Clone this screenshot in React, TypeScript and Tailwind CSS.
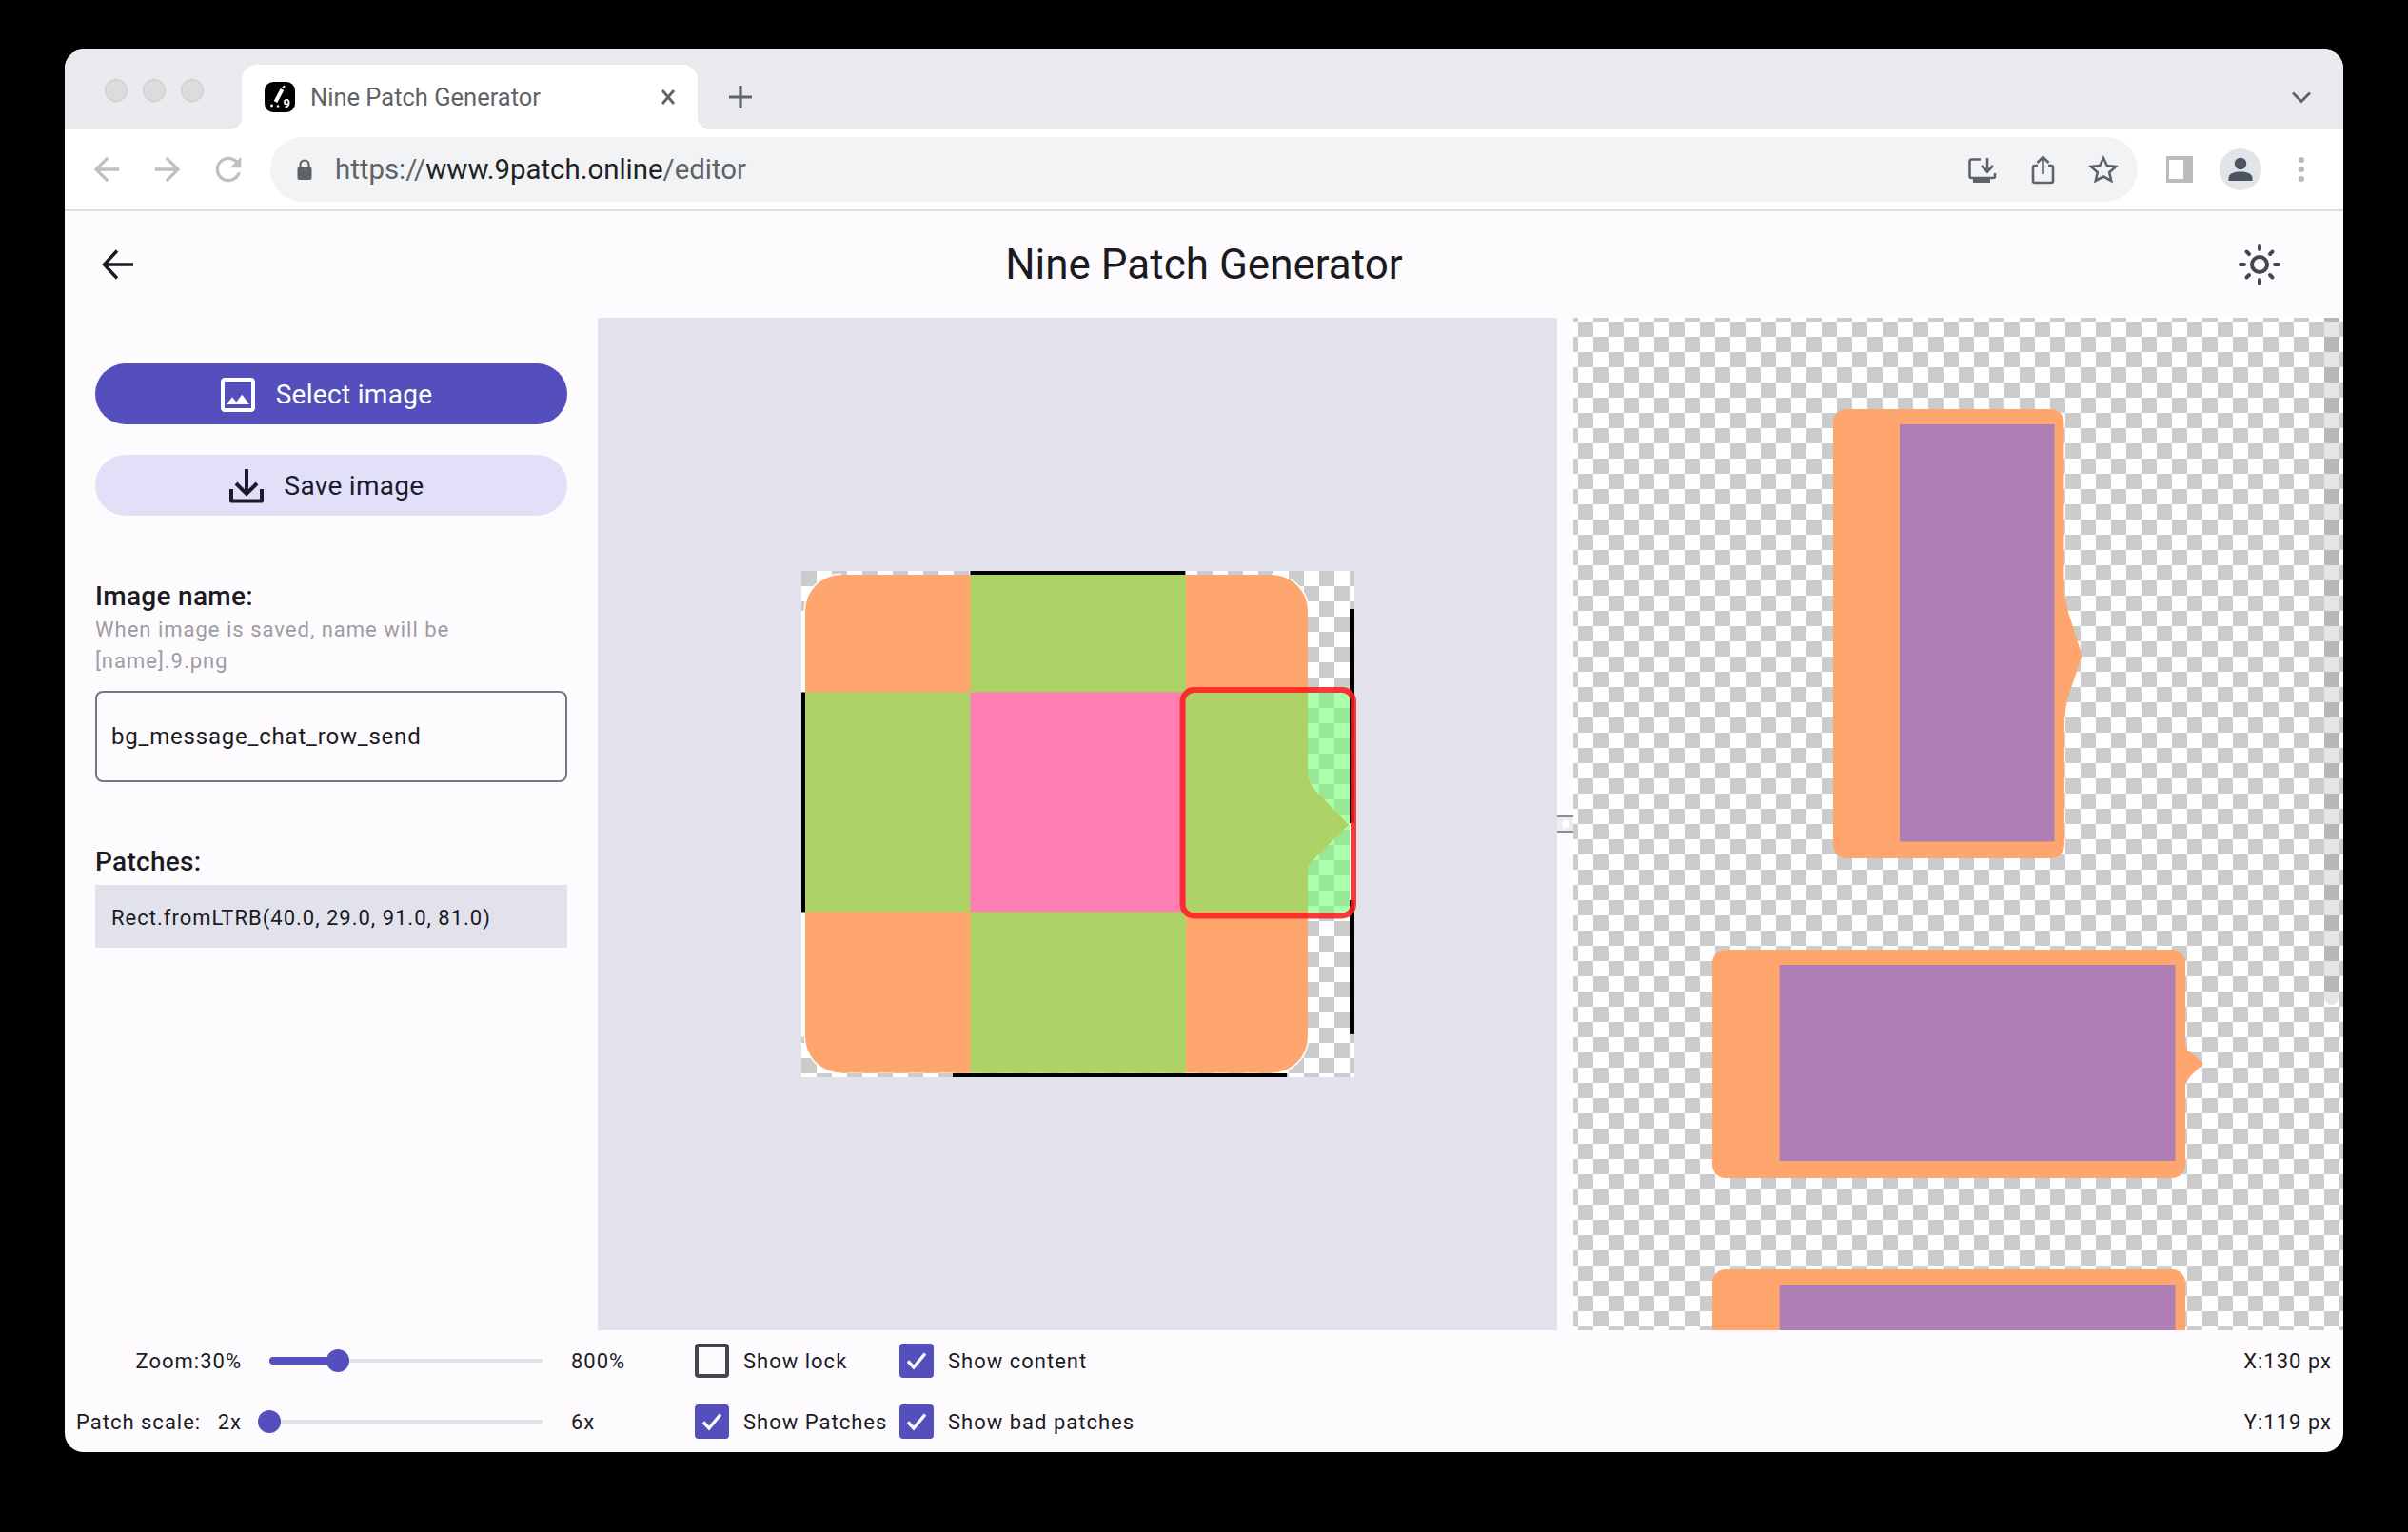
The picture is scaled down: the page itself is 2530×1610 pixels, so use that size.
import type { ReactNode } from "react";

const ORANGE = "#ffa56e";
const GREEN = "#add366";
const PINK = "#ff7fb3";
const PURPLE = "#af7eb4";

function Favicon() {
  return (
    <svg width="32" height="32" viewBox="0 0 32 32" className="shrink-0">
      <rect x="0" y="0" width="32" height="32" rx="9" fill="#000" />
      <path d="M18.5 8 L11.5 21" stroke="#fff" strokeWidth="4" />
      <path d="M19.5 4.5 L20.5 6" stroke="#fff" strokeWidth="3" />
      <circle cx="7.5" cy="25" r="1.4" fill="#fff" />
      <circle cx="14" cy="25.5" r="1.2" fill="#fff" />
      <text x="19.5" y="27" fontSize="13" fontWeight="700" fill="#fff" fontFamily="Roboto, sans-serif">9</text>
    </svg>
  );
}

function MaterialIcon({ d, color, size = 40 }: { d: string; color: string; size?: number }) {
  return (
    <svg width={size} height={size} viewBox="0 0 24 24" fill={color} className="shrink-0">
      <path d={d} />
    </svg>
  );
}

function ToolbarIcon({ children }: { children: ReactNode }) {
  return (
    <svg width="40" height="40" viewBox="0 0 40 40" fill="none" stroke="#5f6368" strokeWidth="2.6" className="shrink-0">
      {children}
    </svg>
  );
}

function BrowserChrome() {
  return (
    <>
      <div className="flex h-[84px] items-start bg-[#e8eaed]">
        <div className="ml-[42px] mt-[31px] flex gap-4">
          <span className="h-6 w-6 rounded-full border border-[#c6c6c6] bg-[#dcdcdc]" />
          <span className="h-6 w-6 rounded-full border border-[#c6c6c6] bg-[#dcdcdc]" />
          <span className="h-6 w-6 rounded-full border border-[#c6c6c6] bg-[#dcdcdc]" />
        </div>
        <div className="relative ml-[40px] mt-4 flex h-[68px] w-[479px] items-center rounded-t-2xl bg-white pl-6 pr-[19px]">
          <span className="absolute -left-3 bottom-0 h-3 w-3 bg-[radial-gradient(circle_at_0_0,transparent_11.5px,#ffffff_12px)]" />
          <span className="absolute -right-3 bottom-0 h-3 w-3 bg-[radial-gradient(circle_at_100%_0,transparent_11.5px,#ffffff_12px)]" />
          <Favicon />
          <span className="ml-4 text-[25.5px] text-[#5f6368]">Nine Patch Generator</span>
          <svg width="24" height="24" viewBox="0 0 24 24" className="ml-auto" stroke="#5f6368" strokeWidth="2.8">
            <path d="M6 5 L18 19 M18 5 L6 19" />
          </svg>
        </div>
        <svg width="32" height="32" viewBox="0 0 32 32" className="ml-[29px] mt-[34px]" stroke="#5f6368" strokeWidth="3.2">
          <path d="M16 4 V28 M4 16 H28" />
        </svg>
        <svg width="24" height="24" viewBox="0 0 24 24" fill="none" stroke="#5f6368" strokeWidth="2.8" className="ml-auto mr-8 mt-[38px]">
          <path d="M3 7.5 L12 16.5 L21 7.5" />
        </svg>
      </div>
      <div className="flex h-[86px] items-start border-b-2 border-[#dadce0] bg-white pt-2">
        <div className="ml-6 mt-[14px] flex gap-6">
          <MaterialIcon color="#bdc1c6" d="M20 11H7.83l5.59-5.59L12 4l-8 8 8 8 1.41-1.41L7.83 13H20v-2z" />
          <MaterialIcon color="#bdc1c6" d="M12 4l-1.41 1.41L16.17 11H4v2h12.17l-5.58 5.59L12 20l8-8z" />
          <MaterialIcon color="#bdc1c6" d="M17.65 6.35C16.2 4.9 14.21 4 12 4c-4.42 0-7.99 3.58-7.99 8s3.57 8 7.99 8c3.73 0 6.84-2.55 7.73-6h-2.08c-.82 2.33-3.04 4-5.65 4-3.31 0-6-2.69-6-6s2.69-6 6-6c1.66 0 3.14.69 4.22 1.78L13 11h7V4l-2.35 2.35z" />
        </div>
        <div className="ml-6 flex h-[68px] w-[1962px] items-center rounded-full bg-[#f1f3f4] pl-6 pr-4">
          <svg width="24" height="24" viewBox="0 0 24 24" className="shrink-0">
            <path d="M7.5 11 V7 a4.5 4.5 0 0 1 9 0 V11" fill="none" stroke="#5f6368" strokeWidth="2.2" />
            <rect x="4.5" y="9.5" width="15" height="13.5" rx="2" fill="#5f6368" />
          </svg>
          <span className="ml-5 text-[29.4px] text-[#5f6368]">
            https://<span className="text-[#202124]">www.9patch.online</span>/editor
          </span>
          <div className="ml-auto flex gap-6">
            <ToolbarIcon>
              <path d="M19 9.5 H9.5 a2 2 0 0 0 -2 2 V27 a2 2 0 0 0 2 2 H32 a2 2 0 0 0 2 -2 V24" />
              <path d="M26 8 V22 M20 16 L26 22.5 L32 16" />
              <rect x="11" y="29" width="18" height="5" fill="#5f6368" stroke="none" />
            </ToolbarIcon>
            <ToolbarIcon>
              <path d="M15 16 H12 a2 2 0 0 0 -2 2 V32 a2 2 0 0 0 2 2 H29 a2 2 0 0 0 2 -2 V18 a2 2 0 0 0 -2 -2 H26" />
              <path d="M20.5 8 V25 M14.5 13 L20.5 7 L26.5 13" />
            </ToolbarIcon>
            <ToolbarIcon>
              <path d="M20 8 L23.8 16 L33 17 L26.2 23.2 L28.2 32 L20 27.5 L11.8 32 L13.8 23.2 L7 17 L16.2 16 Z" />
            </ToolbarIcon>
          </div>
        </div>
        <div className="ml-[30px] mt-5 flex h-7 w-[28px] bg-[#bcbcbc] py-1 pl-[3px] pr-[10px]">
          <div className="h-full w-full bg-white" />
        </div>
        <div className="ml-7 mt-3 flex h-11 w-11 items-center justify-center rounded-full bg-[#e1e4e8]">
          <svg width="44" height="44" viewBox="0 0 44 44" fill="#4a5462">
            <circle cx="22" cy="16" r="6.2" />
            <path d="M9.5 34 V31 C9.5 26 16 24.5 22 24.5 C28 24.5 34.5 26 34.5 31 V34 Z" />
          </svg>
        </div>
        <div className="ml-[39px] mt-[21px] flex flex-col gap-1">
          <span className="h-1.5 w-1.5 rounded-full bg-[#b9b9b9]" />
          <span className="h-1.5 w-1.5 rounded-full bg-[#b9b9b9]" />
          <span className="h-1.5 w-1.5 rounded-full bg-[#b9b9b9]" />
        </div>
      </div>
    </>
  );
}

function AppHeader() {
  return (
    <div className="grid h-[112px] shrink-0 grid-cols-[1fr_auto_1fr] items-center">
      <svg width="48" height="48" viewBox="0 0 48 48" fill="none" stroke="#1b1b1f" strokeWidth="3.4" className="ml-8">
        <path d="M40 24 H10 M23 9.5 L9.5 24 L23 38.5" />
      </svg>
      <div className="text-[44px] leading-none text-[#1b1b1f]">Nine Patch Generator</div>
      <svg width="48" height="48" viewBox="0 0 48 48" fill="none" stroke="#49454f" strokeWidth="4" strokeLinecap="round" className="ml-auto mr-16">
        <circle cx="24" cy="24" r="8" />
        <path d="M24 4 V8 M24 40 V44 M4 24 H8 M40 24 H44 M10.5 10.5 L13 13 M35 35 L37.5 37.5 M37.5 10.5 L35 13 M13 35 L10.5 37.5" />
      </svg>
    </div>
  );
}

function Sidebar() {
  return (
    <div className="w-[560px] shrink-0 px-8 pt-12">
      <div className="flex h-16 items-center justify-center gap-4 rounded-full bg-[#544fbd] pr-4 pt-0.5 text-[28px] tracking-[0.3px] text-white">
        <svg width="48" height="48" viewBox="0 0 24 24" fill="#ffffff">
          <path d="M19 5v14H5V5h14m0-2H5c-1.1 0-2 .9-2 2v14c0 1.1.9 2 2 2h14c1.1 0 2-.9 2-2V5c0-1.1-.9-2-2-2zm-4.86 8.86l-3 3.87L9 13.14 6 17h12l-3.86-5.14z" />
        </svg>
        Select image
      </div>
      <div className="mt-8 flex h-16 items-center justify-center gap-4 rounded-full bg-[#e2e0f9] pr-4 pt-0.5 text-[28px] tracking-[0.3px] text-[#1b1a2e]">
        <svg width="48" height="48" viewBox="0 0 48 48" fill="none" stroke="#1b1a2e" strokeWidth="4">
          <path d="M24 6 V32 M13 21 L24 32 L35 21" />
          <path d="M8 27 V39.5 H40 V27" strokeLinejoin="round" />
        </svg>
        Save image
      </div>
      <div className="mt-16 pt-px text-[28px] font-medium leading-10 tracking-[0.3px] text-[#1b1b1f]">Image name:</div>
      <div className="-mt-0.5 text-[22px] leading-[33px] tracking-[1px] text-[#9d9ca3]">
        When image is saved, name will be
        <br />
        [name].9.png
      </div>
      <input
        readOnly
        value="bg_message_chat_row_send"
        className="mt-[15px] block h-24 w-full rounded-lg border-2 border-[#77767f] bg-transparent pl-[15px] text-[24px] tracking-[0.8px] text-[#1b1b1f] outline-none"
      />
      <div className="mt-16 text-[28px] font-medium leading-10 tracking-[0.3px] text-[#1b1b1f]">Patches:</div>
      <div className="mt-1 flex h-[66px] items-center bg-[#e2e2ec] pl-[17px] pt-0.5 text-[22px] tracking-[1px] text-[#1b1b1f]">
        Rect.fromLTRB(40.0, 29.0, 91.0, 81.0)
      </div>
    </div>
  );
}

function PatchImage() {
  const shape =
    "M43 4 H495 A38 38 0 0 1 533 42 V217 Q536 226 541 231 L575.7 266.7 L541 301 Q536 306 533 310 V489.5 A38 38 0 0 1 495 527.5 H43 A38 38 0 0 1 5 489.5 V42 A38 38 0 0 1 43 4 Z";
  return (
    <svg width="582" height="532" viewBox="0 0 582 532" className="shrink-0 overflow-visible">
      <defs>
        <pattern id="checkGrey" x="1" y="0" width="32" height="32" patternUnits="userSpaceOnUse">
          <rect width="32" height="32" fill="#ffffff" />
          <rect width="16" height="16" fill="#cccccc" />
          <rect x="16" y="16" width="16" height="16" fill="#cccccc" />
        </pattern>
        <pattern id="checkGreen" x="1" y="0" width="32" height="32" patternUnits="userSpaceOnUse">
          <rect width="32" height="32" fill="#aaffaa" />
          <rect width="16" height="16" fill="#98e898" />
          <rect x="16" y="16" width="16" height="16" fill="#98e898" />
        </pattern>
        <clipPath id="shapeClip">
          <path d={shape} />
        </clipPath>
      </defs>
      <rect x="1" y="0" width="581" height="532" fill="url(#checkGrey)" />
      <rect x="533" y="128" width="45" height="231" fill="url(#checkGreen)" />
      <path d="M5 42 V489.5" fill="none" stroke="#ffffff" strokeWidth="8" />
      <path
        d="M533 42 A38 38 0 0 0 495 4 M43 4 A38 38 0 0 0 5 42 M5 489.5 A38 38 0 0 0 43 527.5 M495 527.5 A38 38 0 0 0 533 489.5"
        fill="none"
        stroke="#ffffff"
        strokeWidth="3"
      />
      <g clipPath="url(#shapeClip)">
        <rect x="0" y="0" width="582" height="532" fill={ORANGE} />
        <rect x="178.4" y="0" width="226.6" height="532" fill={GREEN} />
        <rect x="0" y="127.5" width="582" height="231" fill={GREEN} />
        <rect x="178.4" y="127.5" width="226.6" height="231" fill={PINK} />
      </g>
      <rect x="178.4" y="0" width="226" height="4" fill="#000" />
      <rect x="160" y="528" width="351" height="4" fill="#000" />
      <rect x="1" y="127.5" width="4" height="231" fill="#000" />
      <rect x="577" y="40" width="5" height="225" fill="#000" />
      <rect x="577" y="265" width="5" height="81" fill="#fff" />
      <rect x="577" y="346" width="5" height="141" fill="#000" />
      <rect x="401.5" y="125" width="179.5" height="237.5" rx="12" fill="none" stroke="#fb2020" strokeOpacity="0.88" strokeWidth="6" />
    </svg>
  );
}

function TallBubble() {
  return (
    <svg width="262" height="472" viewBox="0 0 262 472" className="shrink-0">
      <path
        d="M14 0 H228.5 A14 14 0 0 1 242.5 14 V192 L246 210 L261.6 259 L246 305 L243 323 V458 A14 14 0 0 1 229 472 H14 A14 14 0 0 1 0 458 V14 A14 14 0 0 1 14 0 Z"
        fill={ORANGE}
      />
      <rect x="70" y="16" width="162.6" height="438.5" fill={PURPLE} />
    </svg>
  );
}

function WideBubble() {
  return (
    <svg width="516" height="240" viewBox="0 0 516 240" className="shrink-0">
      <path
        d="M14 0 H483 A14 14 0 0 1 497 14 V99 Q498 106 503 108 L516 120 L503 132 Q499 137 497 142 V226 A14 14 0 0 1 483 240 H14 A14 14 0 0 1 0 226 V14 A14 14 0 0 1 14 0 Z"
        fill={ORANGE}
      />
      <rect x="70.6" y="16" width="416" height="206" fill={PURPLE} />
    </svg>
  );
}

function Workspace() {
  return (
    <div className="flex h-[1064px] shrink-0">
      <Sidebar />
      <div className="flex w-[1008px] shrink-0 items-center justify-center bg-[#e2e2ec]">
        <PatchImage />
      </div>
      <div className="flex w-[17px] shrink-0 items-center">
        <div className="flex h-[18px] w-full items-center justify-center border-y-2 border-[#8d8d97] bg-[#eeeef2]">
          <span className="h-2 w-2 rounded-full bg-white" />
        </div>
      </div>
      <div className="relative flex flex-1 flex-col items-center gap-24 overflow-hidden bg-[conic-gradient(#cccccc_25%,#ffffff_0_50%,#cccccc_0_75%,#ffffff_0)] bg-[length:32px_32px] bg-[position:-11px_4px] pr-0.5 pt-24">
        <TallBubble />
        <WideBubble />
        <WideBubble />
        <div className="absolute right-[5px] top-0 h-[722px] w-[15px] rounded-b-full bg-black/10" />
      </div>
    </div>
  );
}

function Slider({ active }: { active: number }) {
  return (
    <div className="relative ml-[29px] h-1 w-[287px] shrink-0 rounded-full bg-[#e4e1e6]">
      <div className="absolute -top-0.5 left-0 h-2 rounded-full bg-[#544fbd]" style={{ width: active }} />
      <div className="absolute -top-2.5 h-6 w-6 -translate-x-1/2 rounded-full bg-[#544fbd]" style={{ left: active }} />
    </div>
  );
}

function Check({ checked, label, width }: { checked: boolean; label: string; width: string }) {
  return (
    <div className={`flex shrink-0 items-center gap-[15px] ${width}`}>
      {checked ? (
        <div className="flex h-9 w-9 items-center justify-center rounded-[4px] bg-[#544fbd]">
          <svg width="28" height="28" viewBox="0 0 28 28" fill="none" stroke="#fff" strokeWidth="3.4">
            <path d="M5 14.5 L11 21 L23 6.5" />
          </svg>
        </div>
      ) : (
        <div className="h-9 w-9 rounded-[4px] border-4 border-[#47464f]" />
      )}
      <span>{label}</span>
    </div>
  );
}

function BottomBar() {
  return (
    <div className="flex flex-col text-[22px] tracking-[1px] text-[#1b1b1f]">
      <div className="flex h-16 items-center">
        <div className="ml-3 w-[174px] shrink-0 text-right">Zoom:30%</div>
        <Slider active={72} />
        <div className="ml-[30px] w-[130px] shrink-0">800%</div>
        <Check checked={false} label="Show lock" width="w-[215px]" />
        <Check checked label="Show content" width="w-[300px]" />
        <div className="ml-auto pr-3">X:130 px</div>
      </div>
      <div className="flex h-16 items-center">
        <div className="ml-3 flex w-[174px] shrink-0 justify-between">
          <span>Patch scale:</span>
          <span>2x</span>
        </div>
        <Slider active={0} />
        <div className="ml-[30px] w-[130px] shrink-0">6x</div>
        <Check checked label="Show Patches" width="w-[215px]" />
        <Check checked label="Show bad patches" width="w-[300px]" />
        <div className="ml-auto pr-3">Y:119 px</div>
      </div>
    </div>
  );
}

export default function App() {
  return (
    <div className="h-[1610px] w-[2530px] overflow-hidden bg-black pl-[68px] pt-[52px] [font-family:Roboto,sans-serif]">
      <div className="flex h-[1474px] w-[2394px] flex-col overflow-hidden rounded-[20px] bg-[#fefbff]">
        <BrowserChrome />
        <AppHeader />
        <Workspace />
        <BottomBar />
      </div>
    </div>
  );
}
